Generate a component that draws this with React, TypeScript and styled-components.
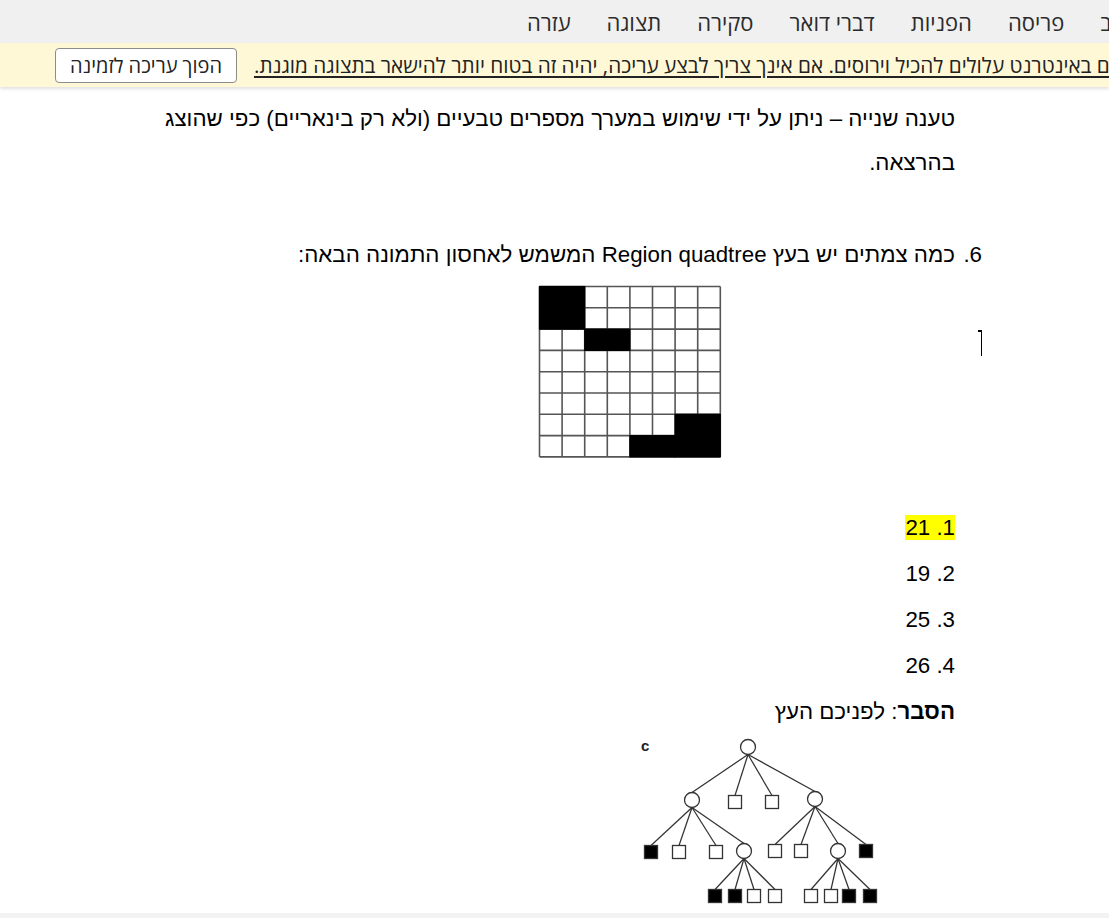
import React from 'react';
import styled, { createGlobalStyle } from 'styled-components';

const Global = createGlobalStyle`
  html, body { margin: 0; padding: 0; background: #fff; }
  body { overflow: hidden; }
`;

const Page = styled.div`
  width: 1109px;
  height: 918px;
  display: flex;
  flex-direction: column;
  overflow: hidden;
  background: #fff;
`;

const MenuBar = styled.nav`
  flex: none;
  height: 43px;
  background: #f0f0f0;
  display: flex;
  align-items: center;
  gap: 36px;
  padding-left: 527px;
  overflow: hidden;
  white-space: nowrap;
  font-family: "Open Sans", "DejaVu Sans", sans-serif;
  font-size: 22px;
  color: #2b2b2b;
`;

const MenuItem = styled.span`
  flex: none;
  direction: rtl;
`;

const Notice = styled.div`
  flex: none;
  height: 44px;
  background: #fff8d6;
  display: flex;
  align-items: center;
  gap: 17px;
  padding-left: 55px;
  overflow: hidden;
  white-space: nowrap;
  position: relative;
  z-index: 1;
  box-shadow: 0 2px 3px rgba(0, 0, 0, 0.12);
  font-family: "Open Sans", "DejaVu Sans", sans-serif;
  font-size: 20px;
  color: #222;
`;

const NoticeButton = styled.button`
  flex: none;
  height: 35px;
  padding: 0 14px;
  background: #fff;
  border: 1px solid #8c8c8c;
  border-radius: 4px;
  font-family: inherit;
  font-size: 20px;
  color: #222;
  direction: rtl;
`;

const NoticeText = styled.span`
  flex: none;
  direction: rtl;
  font-size: 20.7px;
  text-decoration: underline;
  text-underline-offset: 3px;
`;

const Doc = styled.main`
  flex: 1;
  min-height: 0;
  overflow: hidden;
  direction: rtl;
  padding: 10px 127px 0 130px;
  font-family: "Liberation Sans", Arial, sans-serif;
  font-size: 22.3px;
  color: #000;
`;

const Para = styled.p<{ $lh?: number; $mt?: number }>`
  margin: ${(p) => p.$mt ?? 0}px 0 0 0;
  padding-right: 27px;
  line-height: ${(p) => p.$lh ?? 46}px;
`;

const ListRow = styled.div<{ $mt?: number }>`
  display: flex;
  margin-top: ${(p) => p.$mt ?? 0}px;
  line-height: 44px;
`;

const ListNum = styled.span`
  flex: none;
  width: 27px;
  text-align: right;
`;

const Figure = styled.div<{ $indent: number; $mt?: number }>`
  position: relative;
  display: flex;
  margin-top: ${(p) => p.$mt ?? 0}px;
  padding-right: ${(p) => p.$indent}px;
`;

const Caret = styled.span`
  position: absolute;
  right: 0;
  top: 45px;
  width: 1.5px;
  height: 26px;
  background: #000;
  &::before {
    content: "";
    position: absolute;
    top: 0;
    right: 1px;
    width: 3px;
    height: 1.5px;
    background: #000;
  }
`;

const Highlight = styled.span`
  background: #ffff00;
`;

const Bold = styled.b`
  font-weight: 700;
`;

const BottomStrip = styled.div`
  flex: none;
  height: 5px;
  background: #f3f3f3;
`;

const menuItems = ['עזרה', 'תצוגה', 'סקירה', 'דברי דואר', 'הפניות', 'פריסה', 'עיצוב', 'ציור', 'הוספה', 'בית', 'קובץ'];

function GridPicture() {
  const cw = 22.6;
  const ch = 21.3;
  const x0 = 1.5;
  const y0 = 1.5;
  const black: [number, number, number, number][] = [
    [0, 0, 2, 2],
    [2, 2, 1, 2],
    [6, 6, 2, 2],
    [7, 4, 1, 2],
  ];
  const lines = [];
  for (let i = 0; i <= 8; i++) {
    lines.push(<line key={'v' + i} x1={x0 + i * cw} y1={y0} x2={x0 + i * cw} y2={y0 + 8 * ch} />);
    lines.push(<line key={'h' + i} x1={x0} y1={y0 + i * ch} x2={x0 + 8 * cw} y2={y0 + i * ch} />);
  }
  return (
    <svg width="184" height="174" viewBox="0 0 184 174">
      <rect x={x0} y={y0} width={8 * cw} height={8 * ch} fill="#fff" />
      <g stroke="#555" strokeWidth="1.6">{lines}</g>
      {black.map(([r, c, h, w]) => (
        <rect key={r + '-' + c} x={x0 + c * cw - 0.6} y={y0 + r * ch - 0.6} width={w * cw + 1.2} height={h * ch + 1.2} fill="#000" />
      ))}
    </svg>
  );
}

type TNode = { x: number; y: number; k: 'c' | 's' | 'b'; p?: number };

function TreePicture() {
  const ox = 638;
  const oy = 738;
  const nodes: TNode[] = [
    { x: 749, y: 748, k: 'c' },
    { x: 693, y: 801, k: 'c', p: 0 },
    { x: 736, y: 803, k: 's', p: 0 },
    { x: 773, y: 803, k: 's', p: 0 },
    { x: 816, y: 800, k: 'c', p: 0 },
    { x: 652, y: 853, k: 'b', p: 1 },
    { x: 680, y: 853, k: 's', p: 1 },
    { x: 717, y: 853, k: 's', p: 1 },
    { x: 745, y: 852, k: 'c', p: 1 },
    { x: 776, y: 852, k: 's', p: 4 },
    { x: 802, y: 852, k: 's', p: 4 },
    { x: 839, y: 852, k: 'c', p: 4 },
    { x: 867, y: 852, k: 'b', p: 4 },
    { x: 716, y: 897, k: 'b', p: 8 },
    { x: 736, y: 897, k: 'b', p: 8 },
    { x: 755, y: 897, k: 's', p: 8 },
    { x: 776, y: 897, k: 's', p: 8 },
    { x: 812, y: 897, k: 's', p: 11 },
    { x: 832, y: 897, k: 's', p: 11 },
    { x: 850, y: 897, k: 'b', p: 11 },
    { x: 871, y: 897, k: 'b', p: 11 },
  ];
  const r = 7.5;
  const half = 6.5;
  return (
    <svg width="246" height="172" viewBox="0 0 246 172" direction="ltr">
      <text x={642 - ox} y={752 - oy} direction="ltr" textAnchor="start" fontFamily="Liberation Sans, Arial, sans-serif" fontWeight="700" fontSize="15" fill="#222">c</text>
      <g stroke="#333" strokeWidth="1.25">
        {nodes.map((n, i) => {
          if (n.p === undefined) return null;
          const pa = nodes[n.p];
          const top = n.k === 'c' ? n.y - r : n.y - half;
          return <line key={'e' + i} x1={pa.x - ox} y1={pa.y + r - oy} x2={n.x - ox} y2={top - oy} />;
        })}
      </g>
      <g stroke="#333" strokeWidth="1.3">
        {nodes.map((n, i) =>
          n.k === 'c' ? (
            <circle key={i} cx={n.x - ox} cy={n.y - oy} r={r} fill="#fff" />
          ) : (
            <rect key={i} x={n.x - half - ox} y={n.y - half - oy} width={half * 2} height={half * 2} fill={n.k === 'b' ? '#000' : '#fff'} />
          )
        )}
      </g>
    </svg>
  );
}

export default function App() {
  return (
    <Page>
      <Global />
      <MenuBar>
        {menuItems.map((m) => (
          <MenuItem key={m}>{m}</MenuItem>
        ))}
      </MenuBar>
      <Notice>
        <NoticeButton>הפוך עריכה לזמינה</NoticeButton>
        <NoticeText>
          היזהר - קבצים באינטרנט עלולים להכיל וירוסים. אם אינך צריך לבצע עריכה, יהיה זה בטוח יותר להישאר בתצוגה מוגנת.
        </NoticeText>
      </Notice>
      <Doc>
        <Para $lh={44}>
          טענה שנייה – ניתן על ידי שימוש במערך מספרים טבעיים (ולא רק בינאריים) כפי שהוצג בהרצאה.
        </Para>
        <ListRow $mt={48}>
          <ListNum>6.</ListNum>
          <span>כמה צמתים יש בעץ Region quadtree המשמש לאחסון התמונה הבאה:</span>
        </ListRow>
        <Figure $indent={260} $mt={8}>
          <GridPicture />
          <Caret />
        </Figure>
        <Para $mt={46}>
          <Highlight>1. 21</Highlight>
        </Para>
        <Para>2. 19</Para>
        <Para>3. 25</Para>
        <Para>4. 26</Para>
        <Para>
          <Bold>הסבר</Bold>: לפניכם העץ
        </Para>
        <Figure $indent={99} $mt={2}>
          <TreePicture />
        </Figure>
      </Doc>
      <BottomStrip />
    </Page>
  );
}
